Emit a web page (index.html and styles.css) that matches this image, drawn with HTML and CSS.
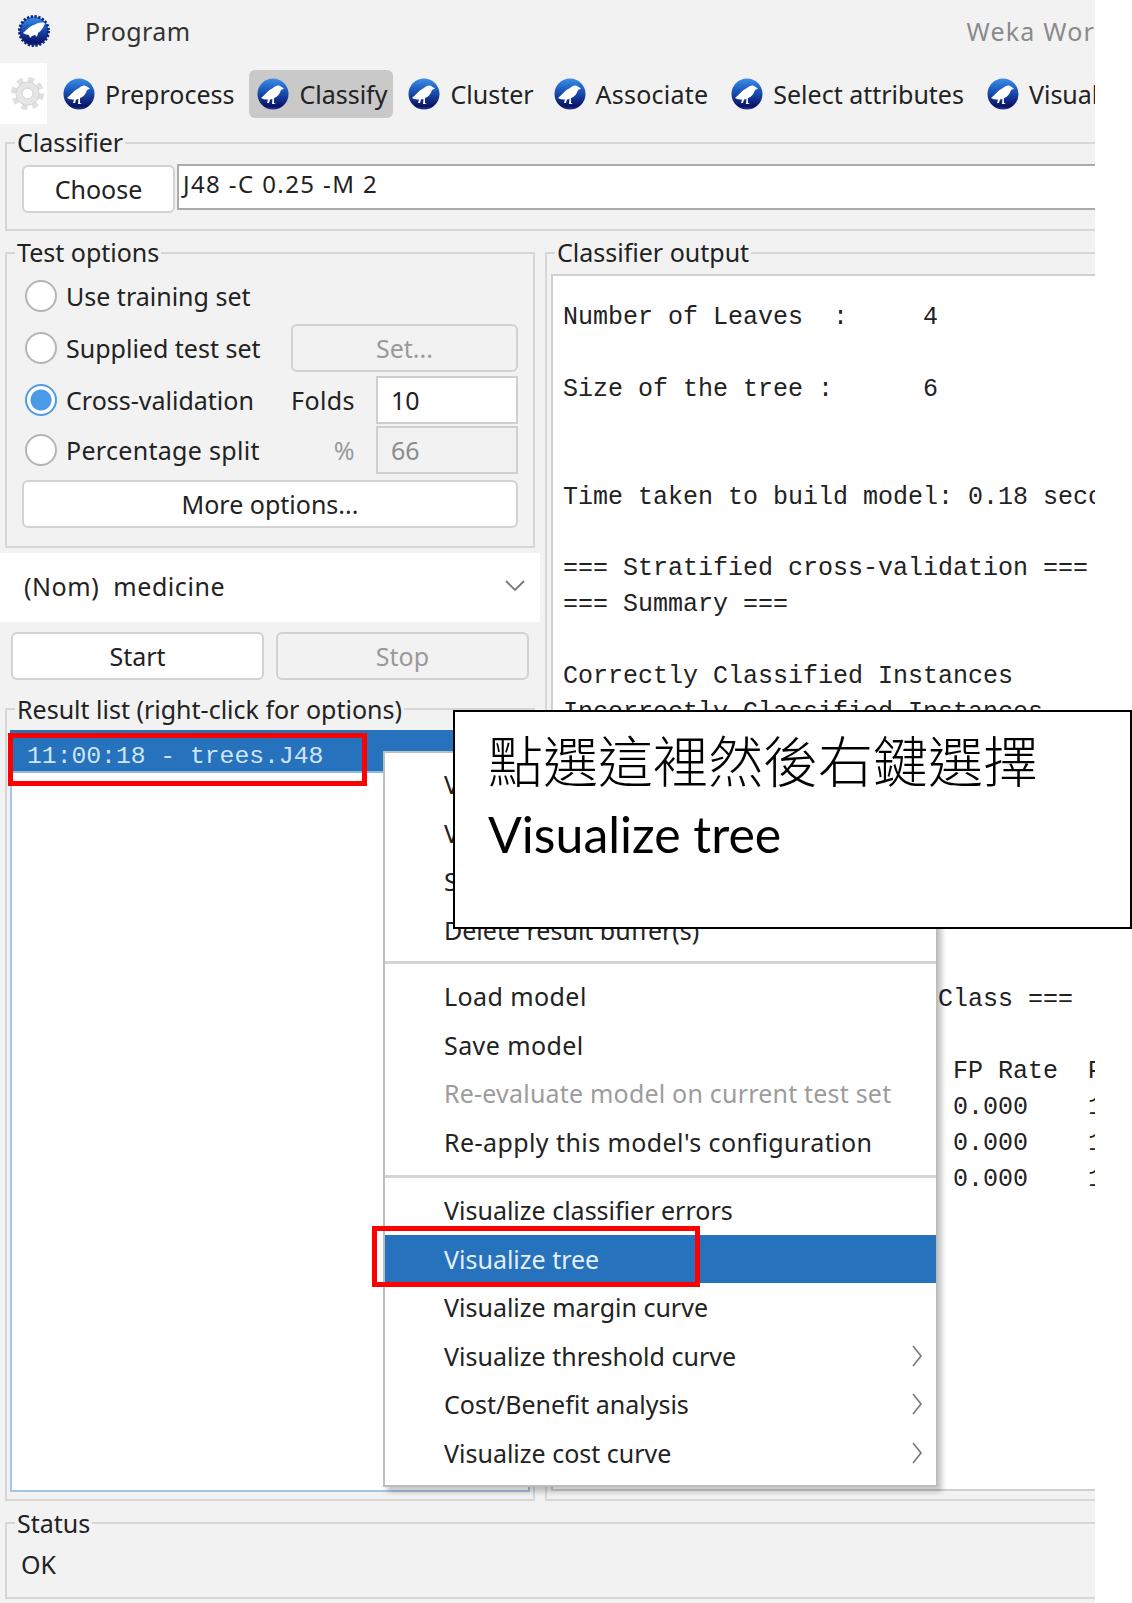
FILE: index.html
```
<!DOCTYPE html>
<html lang="zh-Hant">
<head>
<meta charset="utf-8">
<title>Weka Workbench</title>
<link rel="stylesheet" href="styles.css">
</head>
<body>
<svg class="defs" width="0" height="0" aria-hidden="true">
  <defs>
    <linearGradient id="ball" x1="0" y1="0" x2="0" y2="1">
      <stop offset="0" stop-color="#3b8fe8"/>
      <stop offset="0.4" stop-color="#1b55bb"/>
      <stop offset="0.9" stop-color="#0a1264"/>
      <stop offset="1" stop-color="#2a3f9a"/>
    </linearGradient>
    <symbol id="bird" viewBox="0 0 32 32">
      <circle cx="16" cy="16" r="15.5" fill="url(#ball)"/>
      <path d="M4 20 C8 17 11 12 16 10 C18 8 21 7 23 8 L27 10.5 L24 12 C23 16 20 19 17 20 L17 25 L19 26 L15 26 L15.5 21 L13 21.5 L12 25 L10 25 L11 21.5 C8 21.5 6 21 4 20Z" fill="#fff"/>
    </symbol>
    <symbol id="bird-edge" viewBox="0 0 32 32">
      <circle cx="16" cy="16" r="14.5" fill="url(#ball)" stroke="#10247f" stroke-width="3" stroke-dasharray="2.2 1.6"/>
      <path d="M5 18 C8 16 11 11 16 10 C19 8 23 7 27 8 C26 12 23 16 20 18 L19 22 L17 20 L14 21 L12 23 L11 20 C9 20 7 19 5 18Z" fill="#fff"/>
    </symbol>
    <symbol id="chev" viewBox="0 0 12 22">
      <path d="M2 1 L10 11 L2 21" fill="none" stroke="#777" stroke-width="1.6"/>
    </symbol>
  </defs>
</svg>

<div class="app">
  <header class="titlebar">
    <svg class="logo"><use href="#bird-edge"/></svg>
    <span class="title-menu">Program</span>
    <span class="title-name">Weka Workbench</span>
  </header>

  <nav class="tabs">
    <div class="gear-box">
      <svg class="gear" viewBox="0 0 36 36">
        <circle cx="18" cy="18" r="14" fill="none" stroke="#e0e0e0" stroke-width="6" stroke-dasharray="6 5"/>
        <circle cx="18" cy="18" r="12" fill="#e6e6e6" stroke="#d2d2d2"/>
        <circle cx="18" cy="18" r="5.5" fill="#fff" stroke="#d0d0d0"/>
      </svg>
    </div>
    <div class="tab"><svg class="icon"><use href="#bird"/></svg>Preprocess</div>
    <div class="tab tab-active"><svg class="icon"><use href="#bird"/></svg>Classify</div>
    <div class="tab tab-cluster"><svg class="icon"><use href="#bird"/></svg>Cluster</div>
    <div class="tab tab-associate"><svg class="icon"><use href="#bird"/></svg>Associate</div>
    <div class="tab"><svg class="icon"><use href="#bird"/></svg>Select attributes</div>
    <div class="tab"><svg class="icon"><use href="#bird"/></svg>Visualize</div>
  </nav>

  <fieldset class="group group-classifier">
    <legend>Classifier</legend>
    <div class="classifier-row">
      <button class="btn btn-choose">Choose</button>
      <div class="classifier-field">J48 -C 0.25 -M 2</div>
    </div>
  </fieldset>

  <main class="main">
    <section class="left">
      <fieldset class="group group-test">
        <legend>Test options</legend>
        <div class="test-grid">
          <label class="opt"><span class="radio"></span>Use training set</label>
          <span></span><span></span>

          <label class="opt"><span class="radio"></span>Supplied test set</label>
          <button class="btn btn-off btn-set">Set...</button>

          <label class="opt"><span class="radio radio-on"></span>Cross-validation</label>
          <span class="cap">Folds</span>
          <div class="num">10</div>

          <label class="opt opt-wide"><span class="radio"></span>Percentage split</label>
          <span class="cap cap-off">%</span>
          <div class="num num-off">66</div>

          <button class="btn btn-more">More options...</button>
        </div>
      </fieldset>

      <div class="select">
        <span class="select-text">(Nom)&nbsp; medicine</span>
        <svg class="caret" viewBox="0 0 20 12"><path d="M1 1 L10 10 L19 1" fill="none" stroke="#777" stroke-width="1.8"/></svg>
      </div>

      <div class="run-row">
        <button class="btn">Start</button>
        <button class="btn btn-off">Stop</button>
      </div>

      <fieldset class="group group-result">
        <legend>Result list (right-click for options)</legend>
        <div class="result-list">
          <div class="result-row">11:00:18 - trees.J48</div>
        </div>
      </fieldset>
    </section>

    <fieldset class="group group-output">
      <legend>Classifier output</legend>
      <pre class="output">Number of Leaves  :     4

Size of the tree :      6


Time taken to build model: 0.18 seconds

=== Stratified cross-validation ===
=== Summary ===

Correctly Classified Instances
Incorrectly Classified Instances







                         Class ===

                          FP Rate  Precision
                          0.000    1.000
                          0.000    1.000
                          0.000    1.000</pre>
    </fieldset>
  </main>

  <fieldset class="group group-status">
    <legend>Status</legend>
    <div class="status-text">OK</div>
  </fieldset>
</div>

<div class="mark mark-row"></div>

<ul class="menu">
  <li>View in main window</li>
  <li>View in separate window</li>
  <li>Save result buffer</li>
  <li>Delete result buffer(s)</li>
  <li class="sep sep-first"></li>
  <li class="wide">Load model</li>
  <li class="wide">Save model</li>
  <li class="off">Re-evaluate model on current test set</li>
  <li class="wide">Re-apply this model's configuration</li>
  <li class="sep sep-second"></li>
  <li>Visualize classifier errors</li>
  <li class="on">Visualize tree</li>
  <li>Visualize margin curve</li>
  <li>Visualize threshold curve<svg class="chev"><use href="#chev"/></svg></li>
  <li>Cost/Benefit analysis<svg class="chev"><use href="#chev"/></svg></li>
  <li>Visualize cost curve<svg class="chev"><use href="#chev"/></svg></li>
</ul>

<div class="mark mark-item"></div>

<aside class="note">
  <p class="note-zh">點選這裡然後右鍵選擇</p>
  <p class="note-en">Visualize tree</p>
</aside>
</body>
</html>
```

FILE: styles.css
```
* { box-sizing: border-box; }

html, body {
  margin: 0;
  padding: 0;
  background: #fff;
}

body {
  position: relative;
  width: 1132px;
  height: 1603px;
  overflow: hidden;
  font-family: "Noto Sans", "Open Sans", sans-serif;
  font-size: 25px;
  color: #222;
}

.defs { position: absolute; }

.app {
  width: 1095px;
  height: 1603px;
  overflow: hidden;
  background: #f2f2f2;
}

/* title bar */
.titlebar {
  height: 63px;
  display: flex;
  align-items: center;
  padding: 0 0 2px 18px;
}
.logo { width: 32px; height: 32px; margin-right: 35px; flex: none; }
.title-menu { color: #333; letter-spacing: 0.4px; }
.title-name {
  margin-left: auto;
  margin-right: -93px;
  color: #8a8a8a;
  letter-spacing: 1.2px;
  white-space: nowrap;
}

/* tabs */
.tabs {
  height: 61px;
  display: flex;
  gap: 9px;
  white-space: nowrap;
}
.gear-box {
  width: 47px;
  height: 61px;
  flex: none;
  margin-right: -1px;
  background: #fff;
  display: flex;
  align-items: center;
  justify-content: flex-end;
  padding-right: 2px;
}
.gear { width: 35px; height: 35px; flex: none; }
.tab {
  flex: none;
  height: 48px;
  margin-top: 7px;
  padding: 0 6px 0 8px;
  border-radius: 6px;
  display: flex;
  align-items: center;
  gap: 10px;
}
.tab-active { background: #c9c9c9; margin-right: -2px; }
.tab-cluster { margin-right: -3px; }
.tab-associate { letter-spacing: 0.22px; }
.icon { width: 32px; height: 32px; flex: none; }

/* group boxes */
.group {
  margin: 0;
  padding: 0;
  min-width: 0;
  border: 2px solid #d6d6d6;
}
.group legend {
  margin-left: 8px;
  padding: 0 2px;
  height: 30px;
  line-height: 30px;
  white-space: nowrap;
}
.group-classifier legend,
.group-test legend,
.group-output legend { line-height: 28px; }
.group-classifier {
  margin: 4px 0 0 5px;
  width: 1130px;
  height: 103px;
}
.classifier-row {
  display: flex;
  gap: 2px;
  padding: 7px 0 0 15px;
}
.classifier-field {
  flex: 1;
  height: 46px;
  margin-top: -1px;
  padding: 0 0 8px 4px;
  display: flex;
  align-items: center;
  background: #fff;
  border: 2px solid #aaa;
  border-width: 2px 0 2px 2px;
  color: #222;
  font-size: 24px;
  letter-spacing: 1.4px;
}

/* buttons */
.btn {
  height: 48px;
  padding: 0;
  background: #fff;
  border: 2px solid #d2d2d2;
  border-radius: 6px;
  font: inherit;
  color: #222;
}
.btn-off { background: #f2f2f2; color: #9a9a9a; }
.btn-choose { width: 153px; flex: none; }

/* main two-column area */
.main {
  display: flex;
  margin-top: 7px;
  height: 1263px;
}
.left { width: 540px; flex: none; }

/* test options */
.group-test {
  margin-left: 5px;
  width: 530px;
  height: 310px;
}
.test-grid {
  display: grid;
  grid-template-columns: 269px 85px 142px;
  grid-template-rows: 52px 52px 50px 54px 48px;
  padding: 4px 0 0 15px;
}
.test-grid > * { height: 48px; }
.opt {
  display: flex;
  align-items: center;
  gap: 9px;
  padding-left: 3px;
  white-space: nowrap;
}
.opt-wide { letter-spacing: 0.3px; }
.radio {
  width: 32px;
  height: 32px;
  flex: none;
  border-radius: 50%;
  background: #fff;
  border: 2px solid #b4b4b4;
}
.radio-on {
  border-color: #4a9be8;
  background: radial-gradient(circle, #4a9be8 0 10px, #fff 11px);
}
.btn-set { grid-column: 2 / 4; }
.cap {
  display: flex;
  align-items: center;
  justify-content: flex-end;
  padding-right: 21px;
  letter-spacing: 0.4px;
}
.cap-off { color: #9a9a9a; }
.num {
  display: flex;
  align-items: center;
  padding-left: 13px;
  background: #fff;
  border: 2px solid #cfcfcf;
}
.num-off { background: #f2f2f2; color: #8c8c8c; }
.btn-more { grid-column: 1 / 4; }

/* attribute select */
.select {
  margin-top: 5px;
  height: 69px;
  padding: 0 15px 3px 24px;
  display: flex;
  align-items: center;
  justify-content: space-between;
  background: #fff;
}
.select-text { letter-spacing: 0.55px; }
.caret { width: 20px; height: 12px; flex: none; }

.run-row {
  display: flex;
  gap: 12px;
  margin-top: 10px;
  padding-left: 11px;
}
.run-row .btn { width: 253px; }

/* result list */
.group-result {
  margin: 14px 0 0 5px;
  width: 530px;
  height: 807px;
}
.result-list {
  margin: 6px 3px 0 3px;
  height: 762px;
  background: #fff;
  border: 2px solid #a4c6e6;
  border-top: 0;
}
.result-row {
  margin: 0 -2px;
  height: 43px;
  padding: 10px 0 0 17px;
  display: flex;
  align-items: center;
  background: #2672bd;
  border-bottom: 2px solid #8fb9e0;
  color: #cfe4f5;
  font-family: "Liberation Mono", monospace;
  font-size: 24.7px;
  white-space: pre;
}

/* output */
.group-output {
  margin-left: 5px;
  width: 620px;
  height: 1263px;
  flex: none;
}
.output {
  margin: 6px 0 0 4px;
  height: 1217px;
  padding: 24px 0 0 10px;
  overflow: hidden;
  background: #fff;
  border: 2px solid #cfcfcf;
  font-family: "Liberation Mono", monospace;
  font-size: 25px;
  line-height: 35.9px;
  color: #222;
}

/* status */
.group-status {
  margin: 7px 0 0 5px;
  width: 1130px;
  height: 91px;
}
.status-text {
  padding: 9px 0 0 14px;
}

/* right-click menu */
.menu {
  position: absolute;
  top: 751px;
  left: 383px;
  width: 555px;
  height: 736px;
  margin: 0;
  padding: 8px 0 0;
  list-style: none;
  background: #fff;
  border: 2px solid #bdbdbd;
  box-shadow: 4px 5px 5px rgba(0, 0, 0, 0.22);
}
.menu li {
  position: relative;
  height: 48.5px;
  padding: 0 0 2px 59px;
  display: flex;
  align-items: center;
  white-space: nowrap;
}
.menu li.sep {
  height: 3px;
  padding: 0;
  background: #d4d4d4;
}
.menu li.sep-first { margin: 6px 0 9px; }
.menu li.sep-second { margin: 8px 0 8px; }
.menu .sep-second ~ li { padding-bottom: 0; }
.menu li.wide { letter-spacing: 0.42px; }
.menu li.off { color: #9c9c9c; letter-spacing: 0.2px; }
.menu li.on { background: #2672bd; color: #e4eff8; }
.chev {
  position: absolute;
  right: 13px;
  top: 13px;
  width: 12px;
  height: 22px;
}

/* annotations */
.mark {
  position: absolute;
  border: 5px solid #f00;
}
.mark-row { left: 8px; top: 733px; width: 359px; height: 53px; }
.mark-item { left: 372px; top: 1226px; width: 328px; height: 61px; }

.note {
  position: absolute;
  left: 453px;
  top: 710px;
  width: 679px;
  height: 219px;
  padding: 6px 0 0 33px;
  background: #fff;
  border: 2px solid #000;
  color: #000;
}
.note p { margin: 0; white-space: nowrap; }
.note-zh {
  font-family: "Noto Sans CJK TC", "Noto Sans", sans-serif;
  font-size: 55px;
  line-height: 80px;
  font-weight: 300;
}
.note-en {
  font-family: "Lato", "Noto Sans", sans-serif;
  font-size: 50px;
  line-height: 72px;
}
```
